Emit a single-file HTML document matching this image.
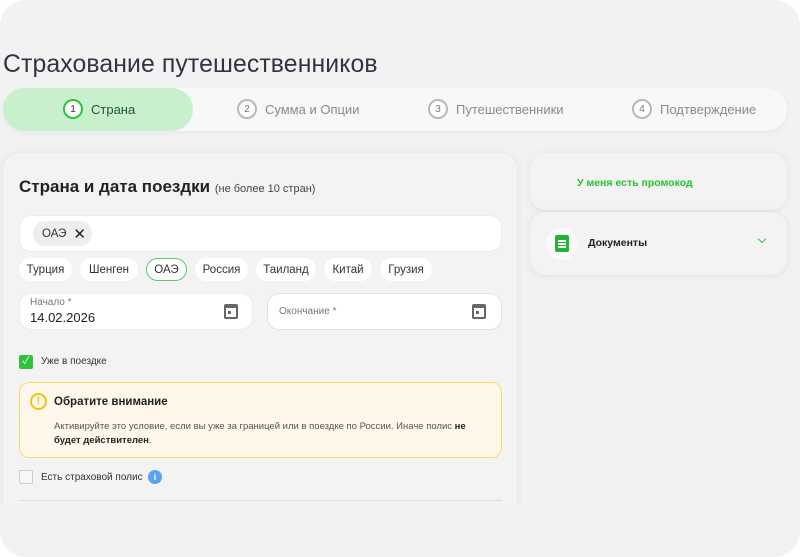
<!DOCTYPE html>
<html><head><meta charset="utf-8"><style>
*{box-sizing:border-box;margin:0;padding:0}
body{width:800px;height:557px;background:#fff;font-family:"Liberation Sans","Noto Sans CJK SC",sans-serif;overflow:hidden;position:relative}
.frame{position:absolute;left:0;top:0;width:800px;height:557px;background:#f2f2f2;border-radius:26px;overflow:hidden}
.abs{position:absolute}
h1{position:absolute;left:3px;top:51px;font-size:24.8px;font-weight:normal;color:#2f3542;letter-spacing:.1px}
.steps{left:3px;top:88px;width:784px;height:43px;background:#f8f8f8;border-radius:22px;box-shadow:0 2px 6px rgba(0,0,0,.04)}
.act{left:3px;top:88px;width:190px;height:43px;background:#c9f0cd;border-radius:22px}
.st{position:absolute;top:99px;display:flex;align-items:center;font-size:13px;color:#8a8a8a}
.num{width:20px;height:20px;border-radius:50%;border:2px solid #b8b8b8;font-size:10px;display:flex;align-items:center;justify-content:center;margin-right:8px;color:#777;background:#fff}
.card{background:#f3f3f3;border-radius:16px;box-shadow:0 1px 8px rgba(0,0,0,.08)}
.inp{background:#fff;border-radius:12px;border:1px solid #ececec}
.chip{position:absolute;top:258px;height:23px;background:#fff;border-radius:12px;font-size:11.5px;color:#333;display:flex;align-items:center;justify-content:center}
.cal{position:absolute;width:14px;height:15px;border:2px solid #666;border-top-width:4px;border-radius:2px}
.cal:after{content:"";position:absolute;left:2px;top:3px;width:3px;height:3px;background:#666}
</style></head><body>
<div class="frame">
<h1>Страхование путешественников</h1>
<div class="abs steps"></div>
<div class="abs act"></div>
<div class="st" style="left:63px;color:#1f5b2a"><span class="num" style="border-color:#2fc23d;color:#333">1</span>Страна</div>
<div class="st" style="left:237px"><span class="num">2</span>Сумма и Опции</div>
<div class="st" style="left:428px"><span class="num">3</span>Путешественники</div>
<div class="st" style="left:632px"><span class="num">4</span>Подтверждение</div>

<div class="abs" style="left:0;top:140px;width:530px;height:365px;overflow:hidden">
<div class="abs card" style="left:3px;top:13px;width:514px;height:420px"></div>
</div>
<div class="abs" style="left:19px;top:177px;font-size:17px;color:#222;font-weight:bold">Страна и дата поездки <span style="font-size:11px;font-weight:normal;color:#444">(не более 10 стран)</span></div>
<div class="abs inp" style="left:19px;top:215px;width:483px;height:37px"></div>
<div class="abs" style="left:33px;top:221px;width:59px;height:25px;background:#eee;border-radius:12px;font-size:11.5px;color:#333;display:flex;align-items:center;padding-left:9px">ОАЭ <span style="font-size:15px;margin-left:7px;color:#222">✕</span></div>
<div class="chip" style="left:19px;width:53px">Турция</div>
<div class="chip" style="left:80px;width:58px">Шенген</div>
<div class="chip" style="left:146px;width:41px;border:1.5px solid #5ccb66">ОАЭ</div>
<div class="chip" style="left:195px;width:53px">Россия</div>
<div class="chip" style="left:256px;width:60px">Таиланд</div>
<div class="chip" style="left:324px;width:48px">Китай</div>
<div class="chip" style="left:380px;width:52px">Грузия</div>

<div class="abs inp" style="left:19px;top:293px;width:234px;height:37px"></div>
<div class="abs" style="left:30px;top:297px;font-size:10px;color:#777">Начало *</div>
<div class="abs" style="left:30px;top:310px;font-size:13px;color:#222">14.02.2026</div>
<div class="cal" style="left:224px;top:304px"></div>
<div class="abs inp" style="left:267px;top:293px;width:235px;height:37px;border-color:#e2e2e2"></div>
<div class="abs" style="left:279px;top:306px;font-size:10px;color:#777">Окончание *</div>
<div class="cal" style="left:472px;top:304px"></div>

<div class="abs" style="left:19px;top:355px;width:14px;height:14px;background:#2fc23d;border-radius:2px;color:#fff;font-size:10px;text-align:center;line-height:14px">✓</div>
<div class="abs" style="left:41px;top:356px;font-size:10px;color:#333">Уже в поездке</div>

<div class="abs" style="left:19px;top:382px;width:483px;height:76px;background:#fff8ea;border:1.5px solid #f7dc6e;border-radius:10px"></div>
<div class="abs" style="left:30px;top:393px;width:17px;height:17px;border:2px solid #f2c20f;border-radius:50%;color:#f2c20f;font-size:11px;font-weight:bold;text-align:center;line-height:13px">!</div>
<div class="abs" style="left:54px;top:396px;font-size:11.5px;font-weight:bold;color:#222">Обратите внимание</div>
<div class="abs" style="left:54px;top:420px;width:440px;font-size:9.5px;line-height:14px;color:#555">Активируйте это условие, если вы уже за границей или в поездке по России. Иначе полис <b style="color:#222">не будет действителен</b>.</div>

<div class="abs" style="left:19px;top:470px;width:14px;height:14px;border:1.5px solid #ccc;border-radius:2px;background:#f7f7f7"></div>
<div class="abs" style="left:41px;top:472px;font-size:10px;color:#333">Есть страховой полис</div>
<div class="abs" style="left:148px;top:470px;width:14px;height:14px;border-radius:50%;background:#5aa2f5;color:#fff;font-size:9px;font-weight:bold;text-align:center;line-height:14px">i</div>
<div class="abs" style="left:19px;top:500px;width:483px;height:1px;background:#ddd"></div>

<div class="abs card" style="left:530px;top:153px;width:257px;height:57px"></div>
<div class="abs" style="left:577px;top:177px;font-size:10.5px;font-weight:bold;color:#25c232">У меня есть промокод</div>
<div class="abs card" style="left:530px;top:212px;width:257px;height:63px"></div>
<div class="abs" style="left:546px;top:228px;width:32px;height:32px;border-radius:50%;background:#fafafa"></div>
<div class="abs" style="left:555px;top:235px;width:14px;height:17px;background:#22b534;border-radius:2px"></div>
<div class="abs" style="left:558px;top:240px;width:8px;height:1.5px;background:#fff;box-shadow:0 3px 0 #fff,0 6px 0 #fff"></div>
<div class="abs" style="left:588px;top:237px;font-size:10.5px;font-weight:bold;color:#222">Документы</div>
<div class="abs" style="left:759px;top:236px;width:6px;height:6px;border-right:1.5px solid #3bc447;border-bottom:1.5px solid #3bc447;transform:rotate(45deg)"></div>
</div>
</body></html>
